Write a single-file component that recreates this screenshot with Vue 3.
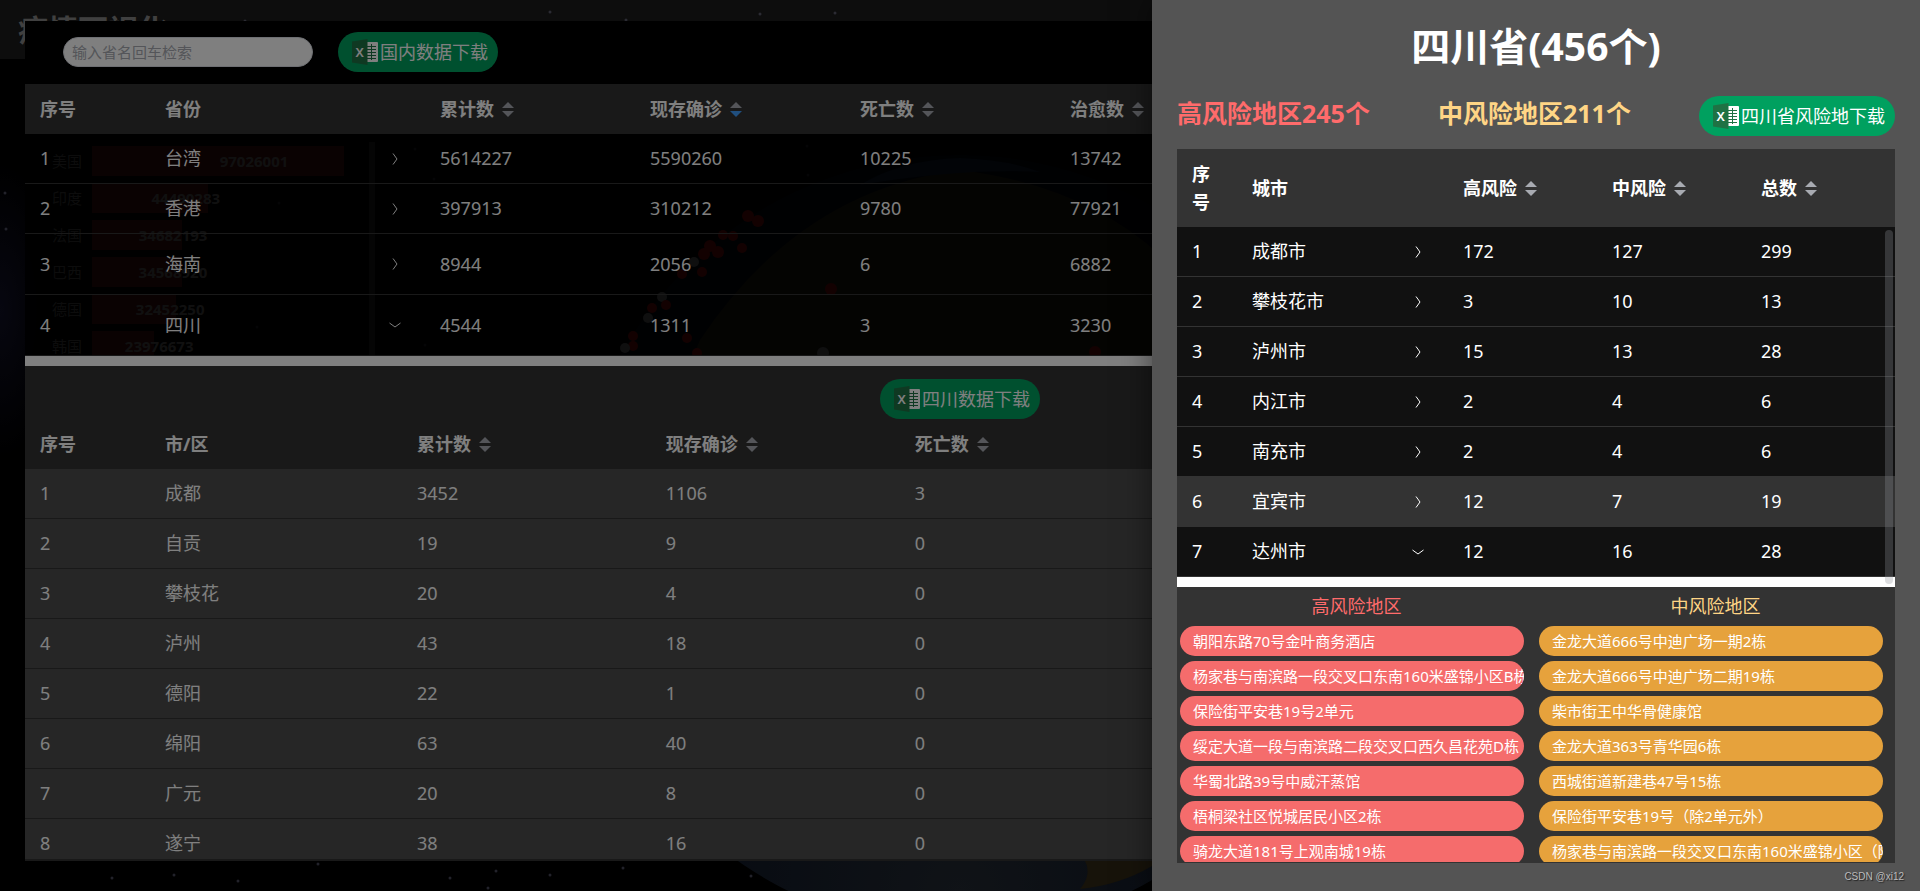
<script setup>
import { ref, computed } from 'vue'

const keyword = ref('')
const openCity = ref('达州市')

const provinces = [
  { id: 1, name: '台湾', total: 5614227, now: 5590260, dead: 10225, heal: 13742 },
  { id: 2, name: '香港', total: 397913, now: 310212, dead: 9780, heal: 77921 },
  { id: 3, name: '海南', total: 8944, now: 2056, dead: 6, heal: 6882, tall: true },
  { id: 4, name: '四川', total: 4544, now: 1311, dead: 3, heal: 3230, tall: true, open: true },
]
const shownProvinces = computed(() => provinces.filter((p) => p.name.includes(keyword.value)))

const cities = [
  { name: '成都', total: 3452, now: 1106, dead: 3 },
  { name: '自贡', total: 19, now: 9, dead: 0 },
  { name: '攀枝花', total: 20, now: 4, dead: 0 },
  { name: '泸州', total: 43, now: 18, dead: 0 },
  { name: '德阳', total: 22, now: 1, dead: 0 },
  { name: '绵阳', total: 63, now: 40, dead: 0 },
  { name: '广元', total: 20, now: 8, dead: 0 },
  { name: '遂宁', total: 38, now: 16, dead: 0 },
]

const riskCities = [
  { name: '成都市', high: 172, mid: 127 },
  { name: '攀枝花市', high: 3, mid: 10 },
  { name: '泸州市', high: 15, mid: 13 },
  { name: '内江市', high: 2, mid: 4 },
  { name: '南充市', high: 2, mid: 4 },
  { name: '宜宾市', high: 12, mid: 7, active: true },
  { name: '达州市', high: 12, mid: 16 },
]

const highList = [
  '朝阳东路70号金叶商务酒店',
  '杨家巷与南滨路一段交叉口东南160米盛锦小区B栋',
  '保险街平安巷19号2单元',
  '绥定大道一段与南滨路二段交叉口西久昌花苑D栋',
  '华蜀北路39号中威汗蒸馆',
  '梧桐梁社区悦城居民小区2栋',
  '骑龙大道181号上观南城19栋',
]
const midList = [
  '金龙大道666号中迪广场一期2栋',
  '金龙大道666号中迪广场二期19栋',
  '柴市街王中华骨健康馆',
  '金龙大道363号青华园6栋',
  '西城街道新建巷47号15栋',
  '保险街平安巷19号（除2单元外）',
  '杨家巷与南滨路一段交叉口东南160米盛锦小区（除B栋外）',
]

const countries = [
  { name: '美国', value: 97026001 },
  { name: '印度', value: 44490283 },
  { name: '法国', value: 34682193 },
  { name: '巴西', value: 34568920 },
  { name: '德国', value: 32452250 },
  { name: '韩国', value: 23976673 },
]
const barWidth = (value) => (value / countries[0].value) * 100 + '%'

// x, y, r, color
const dots = [
  [748, 216, 6, '#e11'], [758, 221, 6, '#e11'], [723, 235, 5, '#e11'], [733, 236, 5, '#e11'],
  [742, 248, 5, '#e11'], [710, 246, 6, '#e11'], [704, 254, 6, '#e11'], [718, 252, 6, '#e11'],
  [694, 262, 5, '#bbb'], [702, 272, 5, '#e11'], [682, 274, 5, '#e11'], [662, 297, 5, '#bbb'],
  [666, 305, 5, '#e11'], [652, 308, 5, '#e11'], [648, 318, 5, '#bbb'], [633, 336, 5, '#e11'],
  [633, 346, 5, '#e11'], [625, 348, 5, '#bbb'], [697, 353, 5, '#e11'], [831, 289, 6, '#e11'],
  [823, 353, 6, '#bbb'], [789, 361, 6, '#bbb'], [687, 338, 5, '#e11'], [1095, 352, 6, '#e11'],
]
const stars = [
  [415, 149], [434, 179], [279, 203], [760, 14], [626, 20], [245, 21], [835, 13], [550, 12],
  [807, 146], [808, 175], [257, 327], [425, 345], [5, 193], [6, 229], [112, 878], [174, 875],
  [496, 871], [488, 888], [450, 878], [550, 875], [623, 868], [751, 876], [318, 864], [238, 881],
]
</script>

<template>
  <div class="screen">
    <!-- shared icons -->
    <svg class="defs" aria-hidden="true">
      <symbol id="excel" viewBox="0 0 26 26">
        <rect x="14" y="3" width="12" height="20" rx="1" fill="#fff" />
        <path
          d="M15 7.5h9M15 10.5h9M15 13.5h9M15 16.5h9M15 19.5h9M19.5 5v16"
          stroke="#1f7244"
          stroke-width="1"
          fill="none"
        />
        <path d="M0 2.5 15.5 0v26L0 23.5z" fill="#1f7244" />
        <text x="3.5" y="18" font-size="13" font-weight="600" fill="#fff">X</text>
      </symbol>
      <symbol id="chevron" viewBox="0 0 14 14">
        <path d="M5 1.5 9 7l-4 5.5" fill="none" stroke="currentColor" stroke-width="1" />
      </symbol>
    </svg>

    <!-- page behind the dialog -->
    <svg class="space" viewBox="0 0 1920 891" preserveAspectRatio="xMidYMid slice">
      <defs>
        <radialGradient id="ocean" cx="0.5" cy="0.95" r="0.5">
          <stop offset="0" stop-color="#20262e" />
          <stop offset="1" stop-color="#060f20" />
        </radialGradient>
        <radialGradient id="haze">
          <stop offset="0" stop-color="#0e0e20" />
          <stop offset="1" stop-color="#0e0e20" stop-opacity="0" />
        </radialGradient>
      </defs>
      <ellipse cx="0" cy="310" rx="60" ry="150" fill="url(#haze)" />
      <circle v-for="(s, i) in stars" :key="i" :cx="s[0]" :cy="s[1]" r="1.5" fill="#445" />
      <circle cx="960" cy="543" r="388" fill="url(#ocean)" />
      <path d="M700 340Q800 190 960 170Q1120 190 1200 300V500H690Q680 380 700 340Z" fill="#3a3420" />
      <path d="M860 185Q900 160 960 158Q1010 160 1040 172Q960 168 860 185Z" fill="#1a3358" />
      <path d="M1085 861 1152 861V866Q1120 885 1080 889Q1092 875 1085 861Z" fill="#2e2614" />
      <circle v-for="(d, i) in dots" :key="i" :cx="d[0]" :cy="d[1]" :r="d[2]" :fill="d[3]" />
    </svg>
    <div class="page">
      <header class="page__header">疫情可视化</header>
      <div class="rank">
        <div v-for="c in countries" :key="c.name" class="rank__row">
          <span>{{ c.name }}</span>
          <div class="rank__track">
            <div class="rank__bar" :style="{ width: barWidth(c.value) }">
              <b>{{ c.value }}</b>
            </div>
          </div>
        </div>
      </div>
    </div>

    <!-- province dialog -->
    <section class="dialog">
      <div class="toolbar">
        <input v-model="keyword" class="search" type="text" placeholder="输入省名回车检索" aria-label="输入省名回车检索" />
        <button class="download"><svg><use href="#excel" /></svg>国内数据下载</button>
      </div>
      <table class="table">
        <colgroup>
          <col class="col-index" />
          <col class="col-province" />
          <col class="col-expand" />
          <col span="7" />
        </colgroup>
        <thead>
          <tr>
            <th>序号</th>
            <th>省份</th>
            <th></th>
            <th>累计数<i class="sort"></i></th>
            <th>现存确诊<i class="sort sort--desc"></i></th>
            <th>死亡数<i class="sort"></i></th>
            <th>治愈数<i class="sort"></i></th>
            <th colspan="3"></th>
          </tr>
        </thead>
        <tbody>
          <tr v-for="p in shownProvinces" :key="p.id" :class="{ tall: p.tall }">
            <td>{{ p.id }}</td>
            <td>{{ p.name }}</td>
            <td class="expand"><svg :class="{ open: p.open }"><use href="#chevron" /></svg></td>
            <td>{{ p.total }}</td>
            <td>{{ p.now }}</td>
            <td>{{ p.dead }}</td>
            <td>{{ p.heal }}</td>
            <td colspan="3"></td>
          </tr>
        </tbody>
      </table>
      <div class="detail">
        <div class="detail__bar">
          <button class="download"><svg><use href="#excel" /></svg>四川数据下载</button>
        </div>
        <table class="table table--city">
          <colgroup>
            <col class="col-index" />
            <col class="col-city" />
            <col span="6" />
          </colgroup>
          <thead>
            <tr>
              <th>序号</th>
              <th>市/区</th>
              <th>累计数<i class="sort"></i></th>
              <th>现存确诊<i class="sort"></i></th>
              <th>死亡数<i class="sort"></i></th>
              <th colspan="3"></th>
            </tr>
          </thead>
          <tbody>
            <tr v-for="(c, i) in cities" :key="c.name">
              <td>{{ i + 1 }}</td>
              <td>{{ c.name }}</td>
              <td>{{ c.total }}</td>
              <td>{{ c.now }}</td>
              <td>{{ c.dead }}</td>
              <td colspan="3"></td>
            </tr>
          </tbody>
        </table>
      </div>
    </section>

    <div class="mask"></div>

    <!-- risk drawer -->
    <aside class="drawer">
      <h1>四川省(456个)</h1>
      <div class="summary">
        <strong class="high">高风险地区245个</strong>
        <strong class="mid">中风险地区211个</strong>
        <button class="download"><svg><use href="#excel" /></svg>四川省风险地下载</button>
      </div>
      <div class="risk">
        <table class="table table--risk">
          <colgroup>
            <col class="col-narrow" />
            <col class="col-name" />
            <col class="col-expand" />
            <col span="3" />
          </colgroup>
          <thead>
            <tr>
              <th>序号</th>
              <th>城市</th>
              <th></th>
              <th>高风险<i class="sort"></i></th>
              <th>中风险<i class="sort"></i></th>
              <th>总数<i class="sort"></i></th>
            </tr>
          </thead>
          <tbody>
            <tr v-for="(c, i) in riskCities" :key="c.name" :class="{ active: c.active }">
              <td>{{ i + 1 }}</td>
              <td>{{ c.name }}</td>
              <td class="expand" @click="openCity = c.name">
                <svg :class="{ open: openCity === c.name }"><use href="#chevron" /></svg>
              </td>
              <td>{{ c.high }}</td>
              <td>{{ c.mid }}</td>
              <td>{{ c.high + c.mid }}</td>
            </tr>
          </tbody>
        </table>
        <span class="thumb"></span>
      </div>
      <div class="places">
        <div class="places__col">
          <h2 class="high">高风险地区</h2>
          <p v-for="item in highList" :key="item" class="tag tag--high">{{ item }}</p>
        </div>
        <div class="places__col">
          <h2 class="mid">中风险地区</h2>
          <p v-for="item in midList" :key="item" class="tag tag--mid">{{ item }}</p>
        </div>
      </div>
      <span class="watermark">CSDN @xi12</span>
    </aside>
  </div>
</template>

<style>
body {
  background: #000;
  overflow: hidden;
}
</style>

<style scoped>
* {
  box-sizing: border-box;
}

.screen {
  position: relative;
  height: 100vh;
  overflow: hidden;
  padding: 21px 25px 30px;
  font: 18px/28px 'Noto Sans', 'Noto Sans CJK SC', sans-serif;
  color: #fff;
}

.defs {
  position: absolute;
  width: 0;
  height: 0;
}

/* BACKGROUND */
.space,
.page,
.mask {
  position: absolute;
  inset: 0;
  width: 100%;
  height: 100%;
}
.page__header {
  height: 59px;
  padding: 10px 18px;
  background: rgba(255, 255, 255, 0.1);
  color: #808080;
  font-size: 30px;
  font-weight: 700;
  line-height: 40px;
}
.rank {
  display: grid;
  gap: 7px;
  width: 375px;
  margin-top: 83px;
  padding: 4px 25px 0 52px;
  border-right: 6px solid #444;
  font-size: 15px;
}
.rank__row {
  display: flex;
  gap: 10px;
  line-height: 30px;
  color: #999;
}
.rank__track {
  flex: 1;
}
.rank__bar {
  display: flex;
  justify-content: center;
  height: 30px;
  background: #821e1e;
}
.rank__bar b {
  padding-left: 72px;
  color: #ccc;
}

/* DIALOG */
.dialog {
  position: relative;
  display: flex;
  flex-direction: column;
  height: 100%;
  overflow: hidden;
  border-bottom: 2px solid #333;
}
.toolbar {
  display: flex;
  flex: none;
  align-items: center;
  gap: 25px;
  height: 63px;
  padding: 0 38px 1px;
  background: #000;
}
.search {
  width: 250px;
  height: 30px;
  padding: 0 8px;
  border: 1px solid #dcdfe6;
  border-radius: 15px;
  background: #fff;
  font: inherit;
  font-size: 15px;
  outline: none;
}
.search::placeholder {
  color: #a8abb2;
}

.download {
  display: flex;
  align-items: center;
  gap: 2px;
  height: 40px;
  padding: 0 10px 1px 14px;
  border: 0;
  border-radius: 20px;
  background: #00a05f;
  color: #fff;
  font: inherit;
  white-space: nowrap;
  cursor: pointer;
}
.download svg {
  width: 26px;
  height: 26px;
}

.table {
  width: 100%;
  flex: none;
  table-layout: fixed;
  border-spacing: 0;
  text-align: left;
}
.table th,
.table td {
  height: 50px;
  padding: 0 15px 1px;
}
.table th {
  background: #333;
}
.table td {
  border-bottom: 1px solid #333;
  background: rgba(0, 0, 0, 0.84);
}
.table .tall td {
  height: 61px;
}
.table .expand {
  padding: 0;
  text-align: center;
}
.expand svg {
  display: block;
  width: 14px;
  height: 14px;
  margin: auto;
}
.expand .open {
  transform: rotate(90deg);
}
.col-index {
  width: 125px;
}
.col-province {
  width: 215px;
}
.col-city {
  width: 252px;
}
.col-expand,
.col-narrow {
  width: 60px;
}
.col-name {
  width: 151px;
}

.sort {
  display: inline-grid;
  gap: 3px;
  margin: 0 0 3px 8px;
  vertical-align: middle;
}
.sort::before,
.sort::after {
  content: '';
  border: 6px solid transparent;
}
.sort::before {
  border-top: 0;
  border-bottom-color: #a8abb2;
}
.sort::after {
  border-bottom: 0;
  border-top-color: #a8abb2;
}
.sort--desc::after {
  border-top-color: #409eff;
}

.detail {
  border-top: 10px solid #fff;
  background: #333;
}
.detail__bar {
  display: flex;
  justify-content: center;
  padding: 13px 0 0;
}
.table--city td {
  background: #4d4d4d;
}

.mask {
  background: rgba(0, 0, 0, 0.5);
}

/* DRAWER */
.drawer {
  position: absolute;
  top: 0;
  right: 0;
  display: flex;
  flex-direction: column;
  width: 40%;
  height: 100%;
  padding: 18px 25px 28px;
  background: #545454;
  box-shadow: 0 0 30px rgba(0, 0, 0, 0.5);
}
.drawer h1 {
  margin: 0;
  font-size: 39px;
  line-height: 56px;
  text-align: center;
}
.summary {
  display: flex;
  flex: none;
  align-items: flex-start;
  justify-content: space-between;
  margin: 22px 0 13px;
}
.summary strong {
  font-size: 25px;
  line-height: 34px;
}
.high {
  color: #ff6b6b;
}
.mid {
  color: #ffd585;
}

.risk {
  position: relative;
}
.table--risk th {
  height: 78px;
}
.table--risk td {
  background: #111;
}
.table--risk .active td {
  background: #333;
}
.thumb {
  position: absolute;
  top: 81px;
  right: 2px;
  bottom: -7px;
  z-index: 1;
  width: 8px;
  border-radius: 4px;
  background: rgba(144, 147, 153, 0.3);
}

.places {
  display: flex;
  flex: 1;
  min-height: 0;
  overflow: hidden;
  border-top: 10px solid #fff;
  border-bottom: 1px solid #333;
  background: #333;
}
.places__col {
  flex: 1;
  min-width: 0;
  padding: 0 12px 0 3px;
}
.places h2 {
  margin: 0;
  padding-left: 9px;
  font-size: 18px;
  font-weight: 400;
  line-height: 39px;
  text-align: center;
}
.tag {
  height: 30px;
  margin: 0 0 5px;
  padding: 0 13px;
  border-radius: 15px;
  overflow: hidden;
  font-size: 15px;
  line-height: 30px;
  white-space: nowrap;
}
.tag--high {
  background: #f56c6c;
}
.tag--mid {
  background: #e6a23c;
}

.watermark {
  position: absolute;
  right: 16px;
  bottom: 6px;
  color: #bbb;
  font: 10px/16px 'Liberation Sans', sans-serif;
  text-shadow: 1px 1px 1px #222;
}
</style>
